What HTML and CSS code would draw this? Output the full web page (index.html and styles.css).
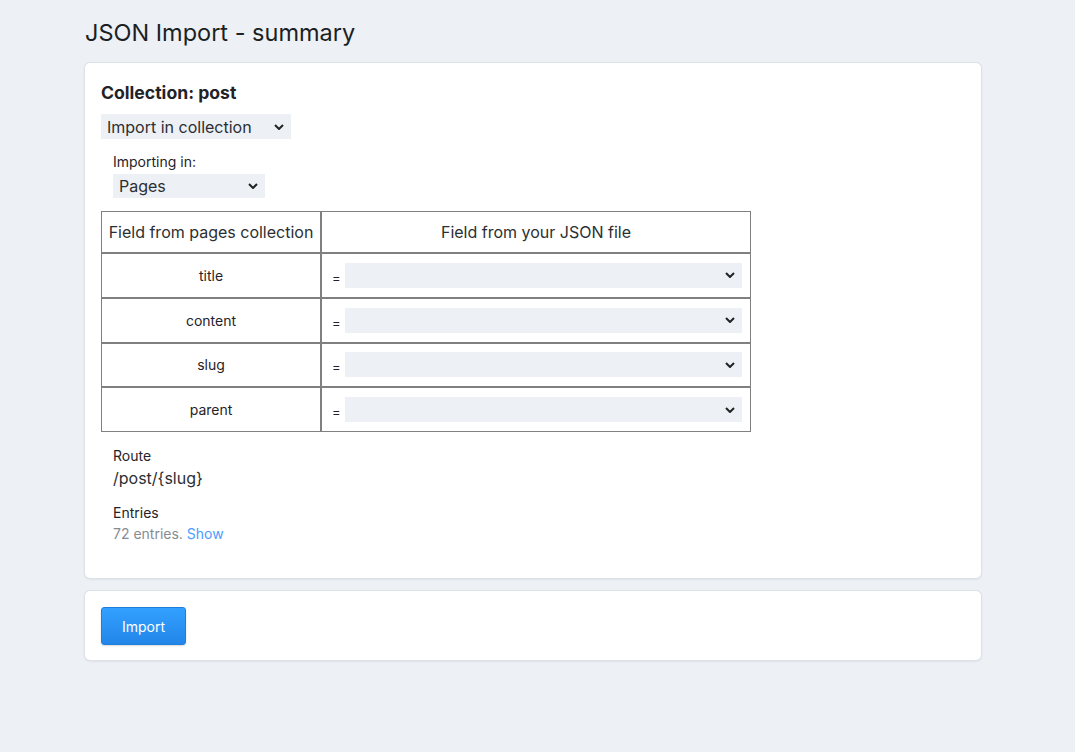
FILE: index.html
```html
<!DOCTYPE html>
<html>
<head>
<meta charset="utf-8">
<title>JSON Import - summary</title>
<link rel="stylesheet" href="styles.css">
</head>
<body>
<div class="page">
  <h1 class="title">JSON Import - summary</h1>
  <div class="card">
    <h2 class="collection">Collection: post</h2>
    <div class="select action-select"><span>Import in collection</span><svg class="chev" viewBox="0 0 10 6"><path d="M1 1l4 4 4-4" fill="none" stroke="#222" stroke-width="2"/></svg></div>
    <div class="importing">
      <div class="label">Importing in:</div>
      <div class="select pages-select"><span>Pages</span><svg class="chev" viewBox="0 0 10 6"><path d="M1 1l4 4 4-4" fill="none" stroke="#222" stroke-width="2"/></svg></div>
    </div>
    <table class="map">
      <thead>
        <tr><th class="c1">Field from pages collection</th><th class="c2">Field from your JSON file</th></tr>
      </thead>
      <tbody>
        <tr><td class="c1">title</td><td class="c2"><div class="cell"><span class="eq">=</span><div class="select row-select"><span></span><svg class="chev" viewBox="0 0 10 6"><path d="M1 1l4 4 4-4" fill="none" stroke="#222" stroke-width="2"/></svg></div></div></td></tr>
        <tr><td class="c1">content</td><td class="c2"><div class="cell"><span class="eq">=</span><div class="select row-select"><span></span><svg class="chev" viewBox="0 0 10 6"><path d="M1 1l4 4 4-4" fill="none" stroke="#222" stroke-width="2"/></svg></div></div></td></tr>
        <tr><td class="c1">slug</td><td class="c2"><div class="cell"><span class="eq">=</span><div class="select row-select"><span></span><svg class="chev" viewBox="0 0 10 6"><path d="M1 1l4 4 4-4" fill="none" stroke="#222" stroke-width="2"/></svg></div></div></td></tr>
        <tr><td class="c1">parent</td><td class="c2"><div class="cell"><span class="eq">=</span><div class="select row-select"><span></span><svg class="chev" viewBox="0 0 10 6"><path d="M1 1l4 4 4-4" fill="none" stroke="#222" stroke-width="2"/></svg></div></div></td></tr>
      </tbody>
    </table>
    <div class="info">
      <div class="label">Route</div>
      <div class="route">/post/{slug}</div>
      <div class="label entries-label">Entries</div>
      <div class="entries">72 entries. <a class="show" href="#">Show</a></div>
    </div>
  </div>
  <div class="card actions">
    <button class="btn">Import</button>
  </div>
</div>
</body>
</html>
```

FILE: styles.css
```css
* { box-sizing: border-box; }
html, body { margin: 0; padding: 0; }
body {
  background: #edf0f5;
  font-family: Inter, "Noto Sans", sans-serif;
  color: #1f2328;
}
.page {
  width: 896px;
  margin-left: 85px;
  padding-top: 17px;
}
.title {
  margin: 0 0 14px 0;
  font-size: 23.5px;
  font-weight: 400;
  line-height: 32px;
  color: #1b1f24;
}
.card {
  background: #fff;
  border-radius: 5px;
  box-shadow: 0 0 0 1px #dde1e8, 0 1px 3px rgba(0,0,0,0.12);
  padding: 16px 16px 35px 16px;
  margin-bottom: 13px;
}
.collection {
  margin: 2px 0 9px 0;
  font-size: 17.6px;
  font-weight: 700;
  line-height: 24px;
}
.select {
  display: flex;
  align-items: center;
  justify-content: space-between;
  background: #edf0f5;
  height: 25px;
  padding: 0 7px 0 6px;
  font-size: 16px;
  color: #2b2f33;
}
.chev { width: 10px; height: 6px; }
.action-select { width: 190px; }
.importing { margin: 14px 0 13px 12px; }
.label { font-size: 14px; line-height: 18px; color: #1f2328; }
.pages-select { width: 152px; height: 24px; margin-top: 3px; }
.map {
  border-collapse: separate;
  border-spacing: 0;
  width: 650px;
}
.map th, .map td {
  border: 1px solid #808080;
  font-size: 14px;
  font-weight: 400;
  text-align: center;
  padding: 0;
}
.map th { height: 42px; font-size: 16px; color: #2b2f33; }
.map td { height: 44.75px; }
.map .c1 { width: 220px; }
.map td.c2 { padding: 0 8px 0 9px; }
.cell { display: flex; align-items: center; }
.eq { font-size: 13px; width: 14px; text-align: left; margin-top: 5px; padding-left: 1px; }
.row-select { flex: 1; height: 25px; }
.info { margin: 15px 0 0 12px; }
.route { font-size: 16px; line-height: 20px; margin-top: 3px; color: #2b2f33; }
.entries-label { margin-top: 16px; }
.entries { font-size: 14px; line-height: 18px; color: #878c93; margin-top: 3px; }
.show { color: #4a9dff; text-decoration: none; }
.actions { padding: 16px 16px 15px 16px; }
.btn {
  display: block;
  width: 85px;
  height: 38px;
  border: 1px solid #1d7fd9;
  border-radius: 3px;
  background: linear-gradient(#32a0ff, #2286e8);
  color: #fff;
  font-family: Inter, "Noto Sans", sans-serif;
  font-size: 14px;
  box-shadow: 0 1px 2px rgba(0,0,0,0.15);
}
```
